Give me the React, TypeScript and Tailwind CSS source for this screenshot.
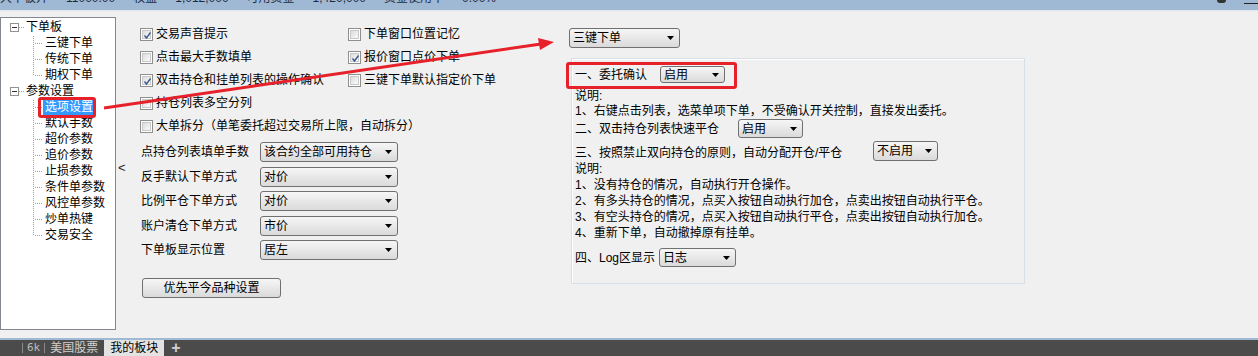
import React from "react";

const FONT = "font-['Liberation_Sans','Noto_Sans_CJK_SC',sans-serif]";

function Tri() {
  return (
    <svg width="7" height="4" viewBox="0 0 7 4" className="shrink-0">
      <polygon points="0,0 7,0 3.5,4" fill="#000" />
    </svg>
  );
}

function Combo({ text, cls }: { text: string; cls: string }) {
  return (
    <div
      className={`flex items-center justify-between border border-[#707070] rounded-[3px] bg-linear-to-b from-[#f6f6f6] to-[#dadada] pl-[3px] pr-[5px] ${cls}`}
    >
      <span className="leading-none text-[12px] text-black whitespace-nowrap">{text}</span>
      <Tri />
    </div>
  );
}

function Check({ checked, label }: { checked?: boolean; label: string }) {
  return (
    <div className="flex items-center h-[13px] gap-[3px]">
      <div className="w-[13px] h-[13px] border border-[#8e8f8f] bg-white p-px shrink-0">
        <div className="w-full h-full border border-[#c9c9c9] bg-linear-to-br from-[#dcdcdc] to-[#fbfbfb] relative">
          {checked && (
            <svg width="9" height="9" viewBox="0 0 9 9" className="absolute left-0 top-0">
              <path d="M1.5 4.5 L3.5 7 L7.5 1.5" stroke="#3d5a8c" strokeWidth="1.4" fill="none" />
            </svg>
          )}
        </div>
      </div>
      <span className="text-[12px] leading-[13px] whitespace-nowrap">{label}</span>
    </div>
  );
}

function TreeConnectors() {
  // coordinates relative to tree padding box (page x-1, y-18)
  const ox = 1;
  const oy = 18;
  const kids1 = [43, 59, 75];
  const kids2 = [107, 123, 139, 155, 171, 187, 203, 219, 235];
  const box = (cy: number) => (
    <g key={"b" + cy}>
      <line x1={19 - ox} y1={cy - oy + 0.5} x2={25 - ox} y2={cy - oy + 0.5} stroke="#a0a0a0" strokeDasharray="1 1" />
      <rect x={10 - ox + 0.5} y={cy - 4 - oy + 0.5} width="8" height="8" fill="#fff" stroke="#919191" />
      <line x1={12 - ox} y1={cy - oy + 0.5} x2={17 - ox} y2={cy - oy + 0.5} stroke="#333" />
    </g>
  );
  return (
    <svg className="absolute left-0 top-0 pointer-events-none" width="114" height="311">
      {box(27)}
      {box(91)}
      <line x1={33 - ox + 0.5} y1={36 - oy} x2={33 - ox + 0.5} y2={75 - oy} stroke="#a0a0a0" strokeDasharray="1 1" />
      <line x1={33 - ox + 0.5} y1={100 - oy} x2={33 - ox + 0.5} y2={235 - oy} stroke="#a0a0a0" strokeDasharray="1 1" />
      {[...kids1, ...kids2].map((y) => (
        <line key={y} x1={35 - ox} y1={y - oy + 0.5} x2={43 - ox} y2={y - oy + 0.5} stroke="#a0a0a0" strokeDasharray="1 1" />
      ))}
    </svg>
  );
}

function Tree() {
  const rows: { t: string; lvl: number; sel?: boolean }[] = [
    { t: "下单板", lvl: 0 },
    { t: "三键下单", lvl: 1 },
    { t: "传统下单", lvl: 1 },
    { t: "期权下单", lvl: 1 },
    { t: "参数设置", lvl: 0 },
    { t: "选项设置", lvl: 1, sel: true },
    { t: "默认手数", lvl: 1 },
    { t: "超价参数", lvl: 1 },
    { t: "追价参数", lvl: 1 },
    { t: "止损参数", lvl: 1 },
    { t: "条件单参数", lvl: 1 },
    { t: "风控单参数", lvl: 1 },
    { t: "炒单热键", lvl: 1 },
    { t: "交易安全", lvl: 1 },
  ];
  return (
    <div className="mt-[6px] w-[116px] h-[313px] border border-[#828790] bg-white relative pt-px shrink-0">
      <TreeConnectors />
      {rows.map((r) => (
        <div key={r.t} className="h-[16px] flex items-center">
          {r.lvl === 0 ? (
            <span className="ml-[25px] text-[12px] leading-[16px]">{r.t}</span>
          ) : r.sel ? (
            <span className="ml-[42px] px-[2px] bg-[#3399ff] text-white text-[12px] leading-[16px]">{r.t}</span>
          ) : (
            <span className="ml-[44px] text-[12px] leading-[16px]">{r.t}</span>
          )}
        </div>
      ))}
      <div className="absolute left-[37px] top-[79px] w-[58px] h-[21px] border-[3px] border-[#e6212a] rounded-[3px]" />
    </div>
  );
}

export default function App() {
  return (
    <div className={`w-[1258px] h-[356px] bg-[#f0f0f0] flex flex-col overflow-hidden relative text-black ${FONT}`}>
      {/* top bar (cut off) */}
      <div className="h-[10px] bg-[#9fb8d4] overflow-hidden flex shrink-0">
        <div className="mt-[-10px] flex gap-[18px] text-[12px] leading-[16px] text-[#1b2b3c] whitespace-nowrap pl-0">
          <span>大下板开</span>
          <span>11000.00</span>
          <span>权益</span>
          <span>1,012,000</span>
          <span>可用资金</span>
          <span>1,420,000</span>
          <span>资金使用率</span>
          <span>0.00%</span>
        </div>
        <div className="ml-auto flex items-start gap-[18px] pr-0">
          <div className="w-[9px] h-[3px] bg-[#333] rounded-b-full" />
          <div className="w-[14px] h-[1px] mt-[3px] bg-[#222]" />
        </div>
      </div>
      <div className="h-px bg-[#dfe6ee] shrink-0" />

      {/* main */}
      <div className="flex-1 flex min-h-0">
        <Tree />
        <div className="w-[24px] shrink-0 pt-[150px] pl-[2px] text-[13px] leading-[14px] text-[#222]">&lt;</div>

        {/* left options */}
        <div className="w-[429px] shrink-0 pt-[17px] text-[12px]">
          <div className="grid grid-cols-[208px_1fr] gap-y-[10px]">
            <Check checked label="交易声音提示" />
            <Check label="下单窗口位置记忆" />
            <Check label="点击最大手数填单" />
            <Check checked label="报价窗口点价下单" />
            <Check checked label="双击持仓和挂单列表的操作确认" />
            <Check label="三键下单默认指定价下单" />
            <div className="col-span-2">
              <Check label="持仓列表多空分列" />
            </div>
            <div className="col-span-2">
              <Check label="大单拆分（单笔委托超过交易所上限，自动拆分）" />
            </div>
          </div>

          <div className="mt-[9px] flex flex-col gap-[4.5px] pl-px">
            {[
              ["点持仓列表填单手数", "该合约全部可用持仓"],
              ["反手默认下单方式", "对价"],
              ["比例平仓下单方式", "对价"],
              ["账户清仓下单方式", "市价"],
              ["下单板显示位置", "居左"],
            ].map(([l, v]) => (
              <div key={l} className="flex items-center h-[20px]">
                <span className="w-[119px] text-[12px] leading-[16px]">{l}</span>
                <Combo text={v} cls="w-[138px] h-[20px]" />
              </div>
            ))}
          </div>

          <div className="mt-[18px] ml-[2px] w-[139px] h-[20px] border border-[#707070] rounded-[3px] bg-linear-to-b from-[#f6f6f6] to-[#dadada] flex items-center justify-center text-[12px] leading-none">
            优先平今品种设置
          </div>
        </div>

        {/* right column */}
        <div className="pt-[17px] text-[12px]">
          <Combo text="三键下单" cls="w-[111px] h-[20px]" />
          <div className="mt-[10px] ml-[2px] w-[454px] h-[226px] border border-[#d5dfe5] shadow-[inset_1px_1px_0_#ffffff] relative pl-[3px] pt-[7px]">
            <div className="flex items-center h-[17px]">
              <span className="w-[85px] leading-[16px]">一、委托确认</span>
              <Combo text="启用" cls="w-[65px] h-[17px]" />
            </div>
            <div className="mt-[6px] leading-[15px]">说明:</div>
            <div className="leading-[15px]">1、右键点击列表，选菜单项下单，不受确认开关控制，直接发出委托。</div>
            <div className="flex items-center h-[19px]">
              <span className="w-[163px] leading-[16px]">二、双击持仓列表快速平仓</span>
              <Combo text="启用" cls="w-[65px] h-[19px]" />
            </div>
            <div className="mt-[3px] flex items-center h-[20px]">
              <span className="w-[298px] leading-[16px] mt-[4px]">三、按照禁止双向持仓的原则，自动分配开仓/平仓</span>
              <Combo text="不启用" cls="w-[65px] h-[20px]" />
            </div>
            <div className="leading-[16px]">说明:</div>
            <div className="leading-[16px]">1、没有持仓的情况，自动执行开仓操作。</div>
            <div className="leading-[16px]">2、有多头持仓的情况，点买入按钮自动执行加仓，点卖出按钮自动执行平仓。</div>
            <div className="leading-[16px]">3、有空头持仓的情况，点买入按钮自动执行平仓，点卖出按钮自动执行加仓。</div>
            <div className="leading-[16px]">4、重新下单，自动撤掉原有挂单。</div>
            <div className="mt-[7px] flex items-center h-[19px]">
              <span className="w-[84px] leading-[16px]">四、Log区显示</span>
              <Combo text="日志" cls="w-[77px] h-[19px]" />
            </div>
            <div className="absolute left-[-6px] top-[3px] w-[171px] h-[27px] border-[3px] border-[#e6212a] rounded-[3px]" />
          </div>
        </div>
      </div>

      {/* bottom */}
      <div className="h-[2px] bg-[#9fb8d4] shrink-0" />
      <div className="h-[16px] bg-[#4b4b4b] flex items-stretch shrink-0 text-[12px] leading-[16px]">
        <div className="w-[22px]" />
        <div className="w-px h-[10px] self-center bg-[#8a8a8a]" />
        <span className="px-[4px] text-[#bdbdbd] text-[11px] font-['DejaVu_Sans_Mono',monospace]">6k</span>
        <div className="w-px h-[10px] self-center bg-[#8a8a8a]" />
        <span className="pl-[5px] pr-[6px] text-[#d0d0d0]">美国股票</span>
        <span className="px-[6px] bg-[#e3e3e3] text-black">我的板块</span>
        <span className="pl-[7px] text-[#d0d0d0] text-[16px] leading-[16px] font-bold">+</span>
      </div>

      {/* annotation arrow */}
      <svg className="absolute left-0 top-0 pointer-events-none" width="1258" height="356">
        <line x1="104" y1="108" x2="541" y2="44" stroke="#e6212a" strokeWidth="3" />
        <polygon points="554,42 540,50 538,38" fill="#e6212a" />
      </svg>
    </div>
  );
}
